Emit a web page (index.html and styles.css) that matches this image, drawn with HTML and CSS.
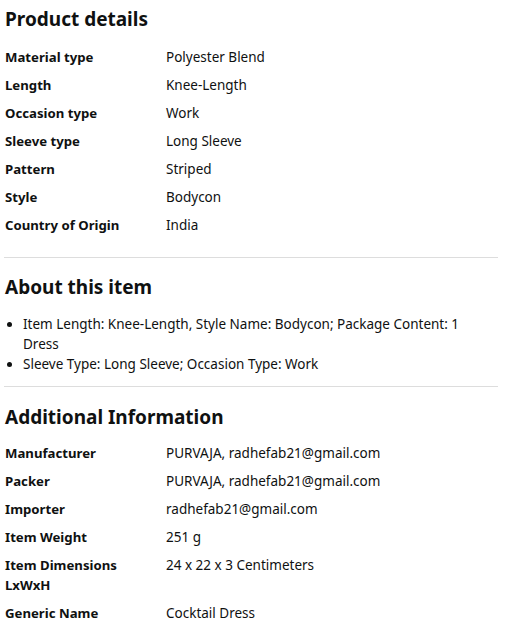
FILE: index.html
```html
<!DOCTYPE html>
<html>
<head>
<meta charset="utf-8">
<link rel="stylesheet" href="styles.css">
</head>
<body>
<div class="page">
  <section class="section first">
    <h2 class="heading">Product details</h2>
    <div class="specs">
      <div class="label">Material type</div><div class="value">Polyester Blend</div>
      <div class="label">Length</div><div class="value">Knee-Length</div>
      <div class="label">Occasion type</div><div class="value">Work</div>
      <div class="label">Sleeve type</div><div class="value">Long Sleeve</div>
      <div class="label">Pattern</div><div class="value">Striped</div>
      <div class="label">Style</div><div class="value">Bodycon</div>
      <div class="label">Country of Origin</div><div class="value">India</div>
    </div>
  </section>
  <hr class="divider first-divider">
  <section class="section">
    <h2 class="heading">About this item</h2>
    <ul class="bullets">
      <li>Item Length: Knee-Length, Style Name: Bodycon; Package Content: 1 Dress</li>
      <li>Sleeve Type: Long Sleeve; Occasion Type: Work</li>
    </ul>
  </section>
  <hr class="divider second-divider">
  <section class="section">
    <h2 class="heading">Additional Information</h2>
    <div class="specs">
      <div class="label">Manufacturer</div><div class="value">PURVAJA, radhefab21@gmail.com</div>
      <div class="label">Packer</div><div class="value">PURVAJA, radhefab21@gmail.com</div>
      <div class="label">Importer</div><div class="value">radhefab21@gmail.com</div>
      <div class="label">Item Weight</div><div class="value">251 g</div>
      <div class="label">Item Dimensions LxWxH</div><div class="value">24 x 22 x 3 Centimeters</div>
      <div class="label">Generic Name</div><div class="value">Cocktail Dress</div>
    </div>
  </section>
</div>
</body>
</html>
```
FILE: styles.css
```css
html, body {
  margin: 0;
  padding: 0;
  background: #ffffff;
}
body {
  font-family: "Noto Sans", "DejaVu Sans", sans-serif;
  color: #0f1111;
  font-size: 13.5px;
}
.page {
  padding: 7px 14px 0 5px;
}
.heading {
  margin: 0;
  font-size: 19px;
  line-height: 24px;
  font-weight: 700;
}
.specs {
  display: grid;
  grid-template-columns: 161px 1fr;
  margin-top: 12px;
}
.label, .value {
  padding: 4px 0;
  line-height: 20px;
}
.label {
  font-size: 13.2px;
  font-weight: 700;
  padding-right: 22px;
}
.divider {
  border: 0;
  border-top: 1px solid #dddddd;
  margin: 18px 0 17px -1px;
  height: 0;
}
.second-divider {
  margin-top: 11px;
  margin-bottom: 18px;
}
.bullets {
  margin: 16px 0 0;
  padding-left: 18px;
  line-height: 19.5px;
}
.bullets li {
  margin-bottom: 1px;
}
.section:last-child .specs {
  margin-top: 10px;
}
```
